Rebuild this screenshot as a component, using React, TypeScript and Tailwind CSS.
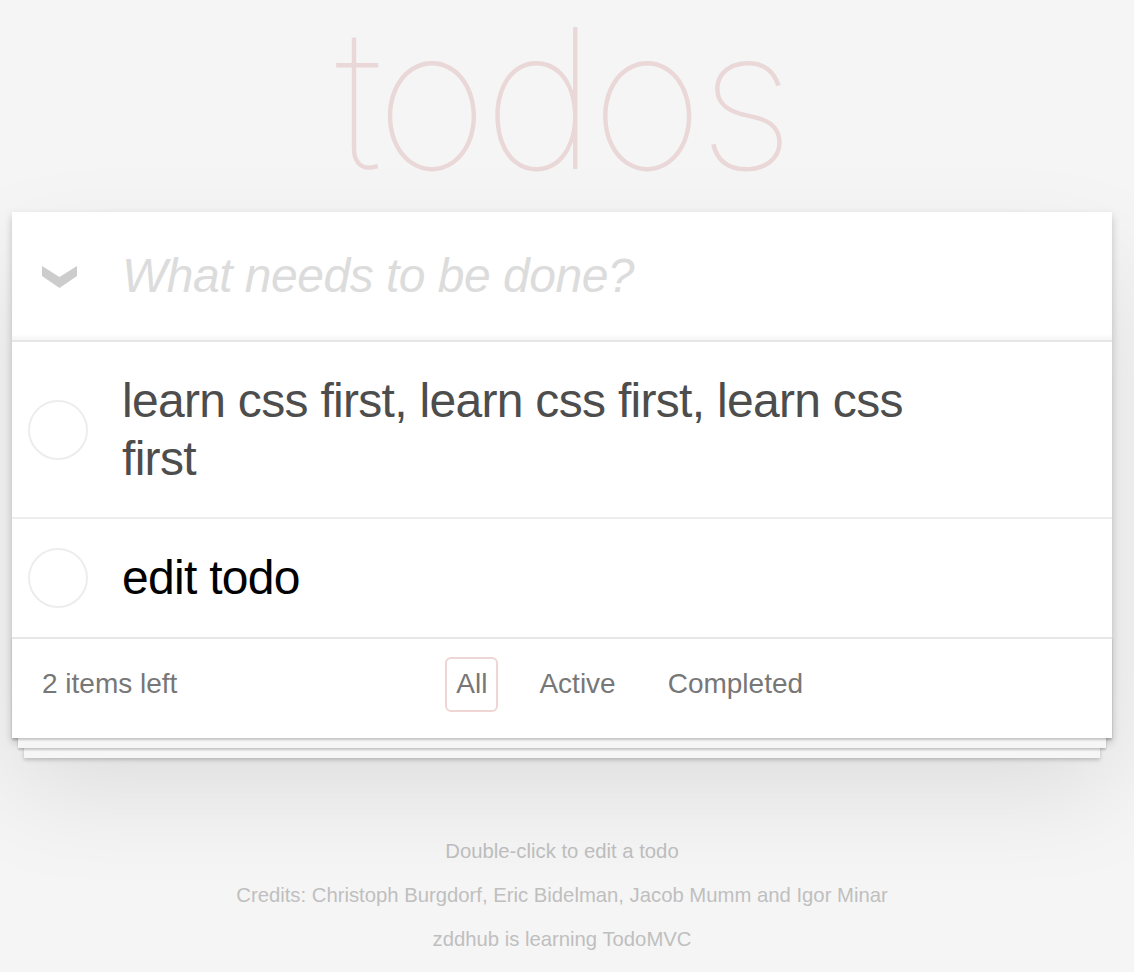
import { useState } from 'react';

type Todo = {
  id: number;
  title: string;
  tone: string;
};

const TODOS: Todo[] = [
  { id: 1, title: 'learn css first, learn css first, learn css first', tone: 'text-[#4d4d4d]' },
  { id: 2, title: 'edit todo', tone: 'text-black' },
];

const FILTERS = ['All', 'Active', 'Completed'];

const ToggleAll = () => (
  <svg width="35" height="23" viewBox="0 0 35 23" className="block">
    <polygon points="0,1 17.5,12 35,1 35,11 17.5,23 0,11" fill="#cccccc" />
  </svg>
);

const TodoItem = ({ todo, last }: { todo: Todo; last: boolean }) => (
  <li
    className={`flex items-center ${last ? '' : 'border-b-2 border-[#ededed]'}`}
  >
    <span className="ml-[16px] w-[60px] h-[60px] shrink-0 rounded-full border-2 border-[#ededed]" />
    <label
      className={`ml-[34px] w-[820px] py-[30px] text-[48px] leading-[57.6px] tracking-[-0.7px] ${todo.tone}`}
    >
      {todo.title}
    </label>
  </li>
);

export default function App() {
  const [filter, setFilter] = useState('All');

  return (
    <div className="min-h-[972px] bg-[#f5f5f5] font-['Liberation_Sans',Arial,sans-serif] overflow-hidden">
      <div className="w-[1100px] ml-[12px]">
        {/* Title */}
        <h1 className="h-[212px] pt-[4px] text-center text-[195px] leading-[188px] font-thin text-[rgba(175,47,47,0.15)] font-['Inter','Roboto',sans-serif] tracking-[-5.5px]">
          todos
        </h1>

        {/* Card */}
        <section className="relative bg-white shadow-[0_4px_8px_rgba(0,0,0,0.2),0_50px_100px_rgba(0,0,0,0.1)]">
          <header className="h-[128px] flex items-center shadow-[inset_0_-4px_2px_rgba(0,0,0,0.03)]">
            <div className="ml-[30px] w-[35px]">
              <ToggleAll />
            </div>
            <span className="ml-[45px] text-[48px] italic text-[#dcdcdc] tracking-[-0.5px]">
              What needs to be done?
            </span>
          </header>

          <ul className="border-t-2 border-[#e6e6e6]">
            {TODOS.map((todo, i) => (
              <TodoItem key={todo.id} todo={todo} last={i === TODOS.length - 1} />
            ))}
          </ul>

          {/* Footer */}
          <footer className="relative h-[101px] pt-[18px] px-[30px] flex justify-between items-start border-t-2 border-[#e6e6e6] text-[28px] text-[#777777] shadow-[0_2px_2px_rgba(0,0,0,0.2),0_16px_0_-6px_#f6f6f6,0_18px_2px_-6px_rgba(0,0,0,0.2),0_32px_0_-12px_#f6f6f6,0_34px_4px_-12px_rgba(0,0,0,0.2)]">
            <span className="h-[55px] flex items-center">2 items left</span>
            <ul className="flex gap-[30px]">
              {FILTERS.map((name) => (
                <li key={name}>
                  <button
                    type="button"
                    onClick={() => setFilter(name)}
                    className={`h-[55px] px-[9px] flex items-center rounded-[6px] border-2 ${
                      filter === name ? 'border-[#efd5d5]' : 'border-transparent'
                    }`}
                  >
                    {name}
                  </button>
                </li>
              ))}
            </ul>
            <span />
          </footer>
        </section>

        {/* Info */}
        <footer className="mt-[91px] text-center text-[20.3px] leading-[44px] text-[#bfbfbf]">
          <p>Double-click to edit a todo</p>
          <p>Credits: Christoph Burgdorf, Eric Bidelman, Jacob Mumm and Igor Minar</p>
          <p>zddhub is learning TodoMVC</p>
        </footer>
      </div>
    </div>
  );
}
